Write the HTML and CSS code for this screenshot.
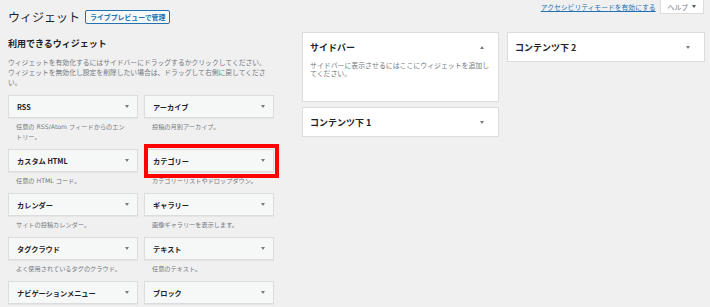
FILE: index.html
```html
<!DOCTYPE html>
<html lang="ja">
<head>
    <meta charset="UTF-8">
    <meta name="viewport" content="width=device-width, initial-scale=1.0">
    <title>ウィジェット</title>
    <link rel="stylesheet" href="styles.css">
</head>
<body>
    <div class="header">
        <div class="title-group">
            <h1>ウィジェット</h1>
            <a class="page-action" href="#">ライブプレビューで管理</a>
        </div>
        <div class="screen-meta">
            <a class="a11y-link" href="#">アクセシビリティモードを有効にする</a>
            <button class="help-tab" type="button">ヘルプ<span class="caret"></span></button>
        </div>
    </div>

    <div class="columns">
        <div class="available">
            <h2>利用できるウィジェット</h2>
            <p class="intro">ウィジェットを有効化するにはサイドバーにドラッグするかクリックしてください。ウィジェットを無効化し設定を削除したい場合は、ドラッグして右側に戻してください。</p>

            <div class="widget-grid">
                <div class="widget">
                    <div class="widget-top"><span class="widget-title">RSS</span><span class="toggle"></span></div>
                    <p class="widget-desc">任意の RSS/Atom フィードからのエントリー。</p>
                </div>
                <div class="widget">
                    <div class="widget-top"><span class="widget-title">アーカイブ</span><span class="toggle"></span></div>
                    <p class="widget-desc">投稿の月別アーカイブ。</p>
                </div>
                <div class="widget">
                    <div class="widget-top"><span class="widget-title">カスタム HTML</span><span class="toggle"></span></div>
                    <p class="widget-desc">任意の HTML コード。</p>
                </div>
                <div class="widget highlight">
                    <div class="widget-top"><span class="widget-title">カテゴリー</span><span class="toggle"></span></div>
                    <p class="widget-desc">カテゴリーリストやドロップダウン。</p>
                </div>
                <div class="widget">
                    <div class="widget-top"><span class="widget-title">カレンダー</span><span class="toggle"></span></div>
                    <p class="widget-desc">サイトの投稿カレンダー。</p>
                </div>
                <div class="widget">
                    <div class="widget-top"><span class="widget-title">ギャラリー</span><span class="toggle"></span></div>
                    <p class="widget-desc">画像ギャラリーを表示します。</p>
                </div>
                <div class="widget">
                    <div class="widget-top"><span class="widget-title">タグクラウド</span><span class="toggle"></span></div>
                    <p class="widget-desc">よく使用されているタグのクラウド。</p>
                </div>
                <div class="widget">
                    <div class="widget-top"><span class="widget-title">テキスト</span><span class="toggle"></span></div>
                    <p class="widget-desc">任意のテキスト。</p>
                </div>
                <div class="widget">
                    <div class="widget-top"><span class="widget-title">ナビゲーションメニュー</span><span class="toggle"></span></div>
                </div>
                <div class="widget">
                    <div class="widget-top"><span class="widget-title">ブロック</span><span class="toggle"></span></div>
                </div>
            </div>
        </div>

        <div class="sidebars">
            <div class="sidebar-col">
                <div class="sidebar open">
                    <div class="sidebar-name">
                        <h3>サイドバー</h3>
                        <span class="toggle up"></span>
                    </div>
                    <p class="sidebar-desc">サイドバーに表示させるにはここにウィジェットを追加してください。</p>
                </div>
                <div class="sidebar">
                    <div class="sidebar-name">
                        <h3>コンテンツ下 1</h3>
                        <span class="toggle"></span>
                    </div>
                </div>
            </div>
            <div class="sidebar-col wide">
                <div class="sidebar">
                    <div class="sidebar-name">
                        <h3>コンテンツ下 2</h3>
                        <span class="toggle"></span>
                    </div>
                </div>
            </div>
        </div>
    </div>
</body>
</html>
```

FILE: styles.css
```css
:root {
    --wp-bg: #f0f0f1;
    --wp-text: #1d2327;
    --wp-muted: #72777c;
    --wp-blue: #2271b1;
    --wp-border: #dcdcde;
    --wp-box: #f6f7f7;
    --wp-arrow: #787c82;
}

* {
    margin: 0;
    padding: 0;
    box-sizing: border-box;
}

body {
    font-family: "Noto Sans CJK JP", "Noto Sans", sans-serif;
    background: var(--wp-bg);
    color: var(--wp-text);
    padding-left: 8px;
}

/* header */

.header {
    display: flex;
    align-items: flex-start;
    height: 24px;
}

.title-group {
    display: flex;
    align-items: center;
    gap: 5px;
    margin-top: 10px;
}

h1 {
    font-size: 12px;
    font-weight: 400;
    line-height: 14px;
}

.page-action {
    display: inline-block;
    height: 14px;
    line-height: 12px;
    padding: 0 4px;
    font-size: 6.9px;
    font-weight: 600;
    color: var(--wp-blue);
    background: var(--wp-box);
    border: 1px solid var(--wp-blue);
    border-radius: 2px;
    text-decoration: none;
}

.screen-meta {
    display: flex;
    align-items: flex-start;
    margin-left: auto;
    margin-right: 6px;
}

.a11y-link {
    font-size: 6.8px;
    line-height: 10px;
    margin-top: 2px;
    margin-right: 4px;
    color: var(--wp-blue);
}

.help-tab {
    display: flex;
    align-items: center;
    gap: 4px;
    height: 14px;
    padding: 0 7px;
    font-family: inherit;
    font-size: 6.8px;
    color: var(--wp-muted);
    background: #fff;
    border: 1px solid var(--wp-border);
    border-top: none;
}

.caret {
    border-left: 2.5px solid transparent;
    border-right: 2.5px solid transparent;
    border-top: 3px solid #50575e;
}

/* layout */

.columns {
    display: flex;
    align-items: flex-start;
    margin-top: 8px;
}

.available {
    width: 265px;
    margin-right: 29px;
}

h2 {
    font-size: 9px;
    font-weight: 700;
    line-height: 12px;
    margin-top: 6px;
}

.intro {
    width: 264px;
    margin-top: 7px;
    font-size: 6.8px;
    line-height: 10px;
    color: var(--wp-muted);
}

/* available widgets */

.widget-grid {
    display: grid;
    grid-template-columns: 130px 130px;
    column-gap: 6px;
    margin-top: 8px;
}

.widget {
    padding-bottom: 7px;
}

.widget-top {
    position: relative;
    display: flex;
    align-items: center;
    justify-content: space-between;
    height: 23px;
    padding: 0 8px;
    background: var(--wp-box);
    border: 1px solid var(--wp-border);
    box-shadow: 0 1px 1px rgba(0, 0, 0, 0.04);
}

.widget-title {
    font-size: 7.2px;
    font-weight: 700;
}

.widget-desc {
    margin-top: 4px;
    padding: 0 10px 0 8px;
    font-family: "DejaVu Sans", "Noto Sans CJK JP", sans-serif;
    font-size: 6.2px;
    line-height: 10px;
    color: var(--wp-muted);
}

.toggle {
    width: 0;
    height: 0;
    border-left: 2.5px solid transparent;
    border-right: 2.5px solid transparent;
    border-top: 3px solid var(--wp-arrow);
}

.toggle.up {
    border-top: none;
    border-bottom: 3px solid var(--wp-arrow);
}

/* red annotation frame over the category widget */
.widget.highlight .widget-top::after {
    content: "";
    position: absolute;
    left: -1px;
    top: -6px;
    right: -6px;
    bottom: -7px;
    border: 4px solid #ff0000;
}

/* sidebars */

.sidebars {
    display: flex;
    align-items: flex-start;
    gap: 8px;
}

.sidebar-col {
    width: 197px;
    display: flex;
    flex-direction: column;
    gap: 5px;
}

.sidebar-col.wide {
    width: 198px;
}

.sidebar {
    background: #fff;
    border: 1px solid var(--wp-border);
}

.sidebar.open {
    height: 70px;
}

.sidebar-name {
    display: flex;
    align-items: center;
    justify-content: space-between;
    height: 28px;
    padding: 0 14px 0 7px;
}

.sidebar-name h3 {
    font-size: 9px;
    font-weight: 700;
}

.sidebar-desc {
    padding: 0 7px;
    font-size: 6.9px;
    line-height: 8px;
    color: var(--wp-muted);
}
```
